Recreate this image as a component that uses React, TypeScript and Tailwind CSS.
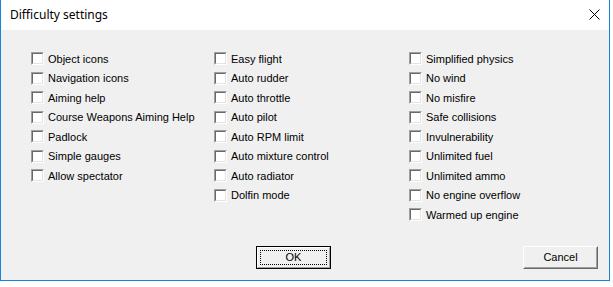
import React from 'react'

const columns: string[][] = [
  ['Object icons', 'Navigation icons', 'Aiming help', 'Course Weapons Aiming Help', 'Padlock', 'Simple gauges', 'Allow spectator'],
  ['Easy flight', 'Auto rudder', 'Auto throttle', 'Auto pilot', 'Auto RPM limit', 'Auto mixture control', 'Auto radiator', 'Dolfin mode'],
  ['Simplified physics', 'No wind', 'No misfire', 'Safe collisions', 'Invulnerability', 'Unlimited fuel', 'Unlimited ammo', 'No engine overflow', 'Warmed up engine'],
]

function Check({ label }: { label: string }) {
  return (
    <label className="flex h-[19.5px] items-center gap-[4px]">
      <span className="block h-[13px] w-[13px] border border-t-[#a0a0a0] border-l-[#a0a0a0] border-b-white border-r-white">
        <span className="block h-full w-full border border-t-[#696969] border-l-[#696969] border-b-[#e3e3e3] border-r-[#e3e3e3] bg-white" />
      </span>
      <span className="whitespace-nowrap">{label}</span>
    </label>
  )
}

export default function App() {
  return (
    <div className="h-[287px] w-[613px] bg-white">
      <div className="flex h-[281px] w-[610px] flex-col border-x border-b border-[#1883d7] bg-white">
        {/* Title bar */}
        <div className="flex h-[30px] items-center justify-between bg-white pl-[9px] pr-[9px]">
          <span className="text-[12px] text-black" style={{ fontFamily: '"Noto Sans", sans-serif' }}>
            Difficulty settings
          </span>
          <svg width="11" height="11" viewBox="0 0 11 11" className="mb-[1px]">
            <path d="M0.5 0.5 L10.5 10.5 M10.5 0.5 L0.5 10.5" stroke="#000" strokeWidth="1" />
          </svg>
        </div>

        {/* Body */}
        <div className="flex flex-1 flex-col bg-[#f0f0f0] font-['Liberation_Sans',Arial,sans-serif] text-[11px] text-black">
          <div className="grid grid-cols-[183px_195px_auto] pl-[30px] pt-[19px]">
            {columns.map((col, i) => (
              <div key={i} className="flex flex-col">
                {col.map((l) => (
                  <Check key={l} label={l} />
                ))}
              </div>
            ))}
          </div>

          <div className="mt-auto flex pb-[11px] pl-[255px] pr-[11px]">
            <button className="h-[23px] w-[75px] border border-black bg-[#f0f0f0] p-0">
              <span className="flex h-full w-full border border-t-white border-l-white border-b-[#a0a0a0] border-r-[#a0a0a0] p-[2px]">
                <span className="flex flex-1 items-center justify-center border border-dotted border-black">OK</span>
              </span>
            </button>
            <button className="ml-auto h-[23px] w-[75px] border border-t-white border-l-white border-b-[#696969] border-r-[#696969] bg-[#f0f0f0] p-0">
              <span className="flex h-full w-full items-center justify-center border border-t-[#f0f0f0] border-l-[#f0f0f0] border-b-[#a0a0a0] border-r-[#a0a0a0]">
                Cancel
              </span>
            </button>
          </div>
        </div>
      </div>
    </div>
  )
}
